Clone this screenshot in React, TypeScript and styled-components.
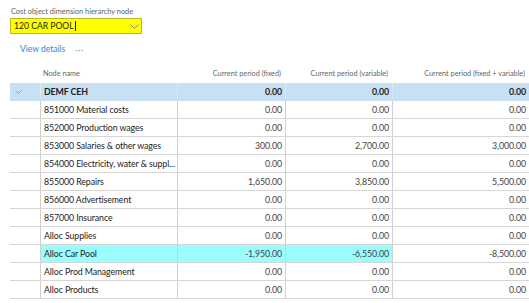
import React from "react";
import styled, { createGlobalStyle } from "styled-components";

const GlobalStyle = createGlobalStyle`
  body {
    margin: 0;
    background: #fff;
    font-family: Lato, "Open Sans", "Liberation Sans", sans-serif;
  }
`;

type Row = {
  name: string;
  fixed: string;
  variable: string;
  total: string;
  root?: boolean;
  hl?: boolean;
};

const rows: Row[] = [
  { name: "DEMF CEH", fixed: "0.00", variable: "0.00", total: "0.00", root: true },
  { name: "851000 Material costs", fixed: "0.00", variable: "0.00", total: "0.00" },
  { name: "852000 Production wages", fixed: "0.00", variable: "0.00", total: "0.00" },
  { name: "853000 Salaries & other wages", fixed: "300.00", variable: "2,700.00", total: "3,000.00" },
  { name: "854000 Electricity, water & suppl...", fixed: "0.00", variable: "0.00", total: "0.00" },
  { name: "855000 Repairs", fixed: "1,650.00", variable: "3,850.00", total: "5,500.00" },
  { name: "856000 Advertisement", fixed: "0.00", variable: "0.00", total: "0.00" },
  { name: "857000 Insurance", fixed: "0.00", variable: "0.00", total: "0.00" },
  { name: "Alloc Supplies", fixed: "0.00", variable: "0.00", total: "0.00" },
  { name: "Alloc Car Pool", fixed: "-1,950.00", variable: "-6,550.00", total: "-8,500.00", hl: true },
  { name: "Alloc Prod Management", fixed: "0.00", variable: "0.00", total: "0.00" },
  { name: "Alloc Products", fixed: "0.00", variable: "0.00", total: "0.00" },
];

const App = () => {
  return (
    <Page>
      <GlobalStyle />
      <Field>
        <Label>Cost object dimension hierarchy node</Label>
        <Select>
          <span>
            120 CAR POOL<Caret />
          </span>
          <Chevron width="9" height="5" viewBox="0 0 9 5">
            <path d="M0.5 0.5 L4.5 4.5 L8.5 0.5" fill="none" stroke="#8f8f55" strokeWidth="1" />
          </Chevron>
        </Select>
      </Field>

      <Toolbar>
        <LinkButton>View details</LinkButton>
        <More>···</More>
      </Toolbar>

      <Grid>
        <HeaderRow>
          <HeadCell />
          <HeadCell>Node name</HeadCell>
          <HeadCell $num>Current period (fixed)</HeadCell>
          <HeadCell $num>Current period (variable)</HeadCell>
          <HeadCell $num>Current period (fixed + variable)</HeadCell>
        </HeaderRow>
        {rows.map((r) => (
          <BodyRow key={r.name} $root={r.root}>
            <Cell $first>
              {r.root && (
                <svg width="7" height="4" viewBox="0 0 7 4">
                  <path d="M0.5 0.5 L3.5 3.5 L6.5 0.5" fill="none" stroke="#7aa6d6" strokeWidth="1" />
                </svg>
              )}
            </Cell>
            <Cell $hl={r.hl} $bold={r.root} $root={r.root}>{r.name}</Cell>
            <Cell $hl={r.hl} $bold={r.root} $root={r.root} $num>{r.fixed}</Cell>
            <Cell $hl={r.hl} $bold={r.root} $root={r.root} $num>{r.variable}</Cell>
            <Cell $bold={r.root} $root={r.root} $num>{r.total}</Cell>
          </BodyRow>
        ))}
      </Grid>
    </Page>
  );
};

export default App;

const Page = styled.div`
  width: 529px;
  height: 303px;
  overflow: hidden;
  padding: 6px 0 0 10px;
  box-sizing: border-box;
`;

const Field = styled.div`
  display: flex;
  flex-direction: column;
  gap: 1px;
`;

const Label = styled.div`
  font-size: 7.4px;
  line-height: 11px;
  color: #5f5f5f;
  padding-left: 1px;
`;

const Select = styled.div`
  width: 132px;
  height: 16px;
  box-sizing: border-box;
  background: #ffff00;
  border: 1px solid #b9b92a;
  display: flex;
  align-items: center;
  justify-content: space-between;
  padding: 0 2px 0 3px;
  font-size: 8.6px;
  color: #222;

  span {
    display: flex;
    align-items: center;
  }
`;

const Caret = styled.i`
  display: inline-block;
  width: 1px;
  height: 10px;
  background: #222;
  margin-left: 1px;
`;

const Chevron = styled.svg`
  display: block;
`;

const Toolbar = styled.div`
  display: flex;
  align-items: center;
  gap: 10px;
  height: 18px;
  margin-top: 6px;
  padding-left: 10px;
`;

const LinkButton = styled.span`
  font-size: 8.5px;
  color: #2b88d8;
`;

const More = styled.span`
  font-size: 9px;
  color: #9a9a9a;
  letter-spacing: 0.5px;
`;

const Grid = styled.div`
  margin-top: 6px;
  display: flex;
  flex-direction: column;
`;

const columns = "30px 137px 108px 107px 137px";

const HeaderRow = styled.div`
  display: grid;
  grid-template-columns: ${columns};
  height: 19px;
  align-items: center;
`;

const HeadCell = styled.div<{ $num?: boolean }>`
  font-size: 7.3px;
  color: #666;
  white-space: nowrap;
  padding: 0 4px 0 3px;
  text-align: ${(p) => (p.$num ? "right" : "left")};
`;

const BodyRow = styled.div<{ $root?: boolean }>`
  display: grid;
  grid-template-columns: ${columns};
  height: 18px;
  box-sizing: border-box;
  border-bottom: 1px solid ${(p) => (p.$root ? "#c7e0f4" : "#d6d6d6")};
  background: ${(p) => (p.$root ? "#c7e0f4" : "#fff")};
`;

const Cell = styled.div<{
  $first?: boolean;
  $hl?: boolean;
  $bold?: boolean;
  $num?: boolean;
  $root?: boolean;
}>`
  display: flex;
  align-items: center;
  justify-content: ${(p) => (p.$num ? "flex-end" : "flex-start")};
  padding: ${(p) => (p.$first ? "0 0 0 5px" : "0 3px 0 3px")};
  border-left: ${(p) =>
    p.$first ? "none" : `1px solid ${p.$root ? "#dde8f2" : "#d0d0d0"}`};
  background: ${(p) => (p.$hl ? "#9bfdfd" : "transparent")};
  font-size: 8.8px;
  letter-spacing: -0.1px;
  font-weight: ${(p) => (p.$bold ? 700 : 400)};
  color: ${(p) => (p.$num && !p.$bold ? "#444" : "#222")};
  white-space: nowrap;
  overflow: hidden;
`;
